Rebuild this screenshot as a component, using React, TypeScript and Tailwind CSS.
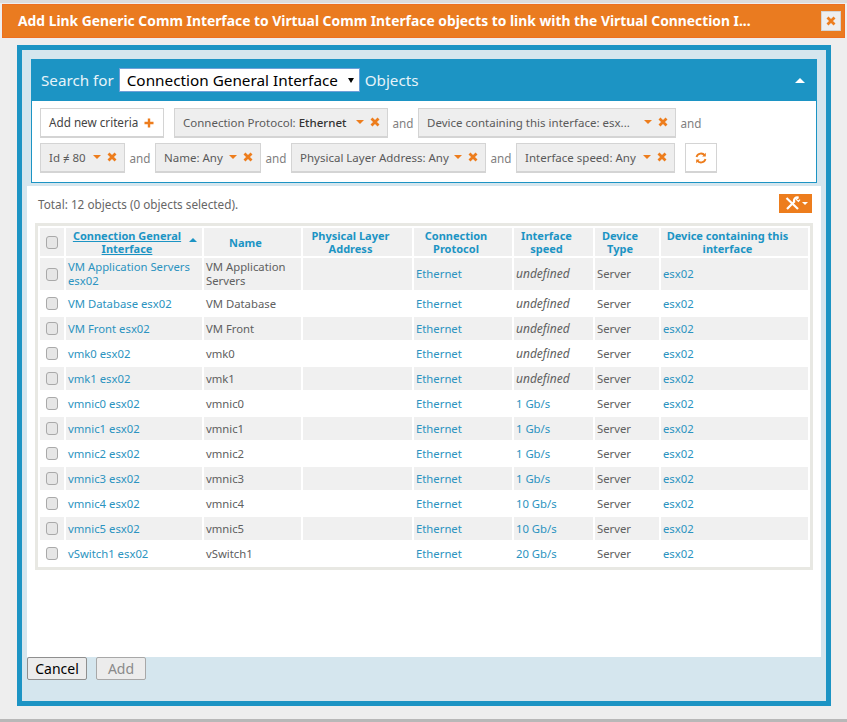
import React from 'react';

const font = "font-['Noto_Sans','Open_Sans',sans-serif]";

interface IRow {
  label: string;
  name: string;
  speed: string;
}

const rows: IRow[] = [
  { label: 'VM Application Servers esx02', name: 'VM Application Servers', speed: 'undefined' },
  { label: 'VM Database esx02', name: 'VM Database', speed: 'undefined' },
  { label: 'VM Front esx02', name: 'VM Front', speed: 'undefined' },
  { label: 'vmk0 esx02', name: 'vmk0', speed: 'undefined' },
  { label: 'vmk1 esx02', name: 'vmk1', speed: 'undefined' },
  { label: 'vmnic0 esx02', name: 'vmnic0', speed: '1 Gb/s' },
  { label: 'vmnic1 esx02', name: 'vmnic1', speed: '1 Gb/s' },
  { label: 'vmnic2 esx02', name: 'vmnic2', speed: '1 Gb/s' },
  { label: 'vmnic3 esx02', name: 'vmnic3', speed: '1 Gb/s' },
  { label: 'vmnic4 esx02', name: 'vmnic4', speed: '10 Gb/s' },
  { label: 'vmnic5 esx02', name: 'vmnic5', speed: '10 Gb/s' },
  { label: 'vSwitch1 esx02', name: 'vSwitch1', speed: '20 Gb/s' },
];

function XIcon({ size = 10 }: { size?: number }) {
  return (
    <svg width={size} height={size} viewBox="0 0 10 10" className="shrink-0">
      <path d="M1.5 1.5 L8.5 8.5 M8.5 1.5 L1.5 8.5" stroke="#ed7d1d" strokeWidth="2.8" />
    </svg>
  );
}

function Caret() {
  return <span className="shrink-0 w-0 h-0 border-x-[4px] border-x-transparent border-t-[4px] border-t-[#ed7d1d] -mt-[2px]" />;
}

function Chip({ children, width }: { children: React.ReactNode; width: string }) {
  return (
    <div className={`${width} h-[30px] shrink-0 flex items-center pl-[8px] bg-[#eeeeee] border border-[#d4d4d4] border-b-2 text-[11.5px] text-[#5a5a5a]`}>
      <span className="whitespace-nowrap flex-1 pt-[1px]">{children}</span>
      <Caret />
      <span className="ml-[6px] mr-[7px] -mt-[2px]"><XIcon /></span>
    </div>
  );
}

function And({ width = 'w-[30px]' }: { width?: string }) {
  return <span className={`${width} text-center shrink-0 pt-[1px] text-[11.7px] text-[#808080]`}>and</span>;
}

function Checkbox() {
  return <span className="block mx-auto w-[12px] h-[13px] rounded-[3px] border border-[#a9a9a9] bg-[#e6e6e6]" />;
}

function Th({ children, width, pad = 'pl-[1px] pr-[15px]' }: { children: React.ReactNode; width: string; pad?: string }) {
  return (
    <th className={`${width} ${pad} bg-[#f0f0f0] text-[#1c94c4] text-[11px] leading-[13px] font-bold text-center`}>
      {children}
    </th>
  );
}

function ResultRow({ row, index }: { row: IRow; index: number }) {
  const cellBg = index % 2 === 0 ? 'bg-[#f0f0f0]' : 'bg-white';
  const height = index === 0 ? 'h-[32px]' : 'h-[23px]';
  const cell = `${cellBg} ${height} px-[2px] text-[11.3px] leading-[14px]`;

  return (
    <tr>
      <td className={cell}><Checkbox /></td>
      <td className={`${cell} text-[#2b93c0]`}>{row.label}</td>
      <td className={`${cell} text-[#606060]`}>{row.name}</td>
      <td className={cell} />
      <td className={`${cell} text-[#2b93c0]`}>Ethernet</td>
      {row.speed === 'undefined'
        ? <td className={`${cell} text-[#606060]`}><span className="italic text-[12px]">undefined</span></td>
        : <td className={`${cell} text-[#2b93c0]`}>{row.speed}</td>}
      <td className={`${cell} text-[#606060]`}>Server</td>
      <td className={`${cell} text-[#2b93c0]`}>esx02</td>
    </tr>
  );
}

function SearchPanel() {
  return (
    <div className="mx-[9px] mt-[9px]">
      <div className="h-[42px] bg-[#1c94c4] flex items-center pl-[10px] pr-[12px] text-[15.2px] text-[#e6f3f9]">
        <span>Search for</span>
        <div className="ml-[5px] w-[241px] h-[24px] bg-white border border-[#6f9fd8] flex items-center pl-[7px] text-[15.3px] text-black whitespace-nowrap">
          <span className="flex-1">Connection General Interface</span>
          <span className="mr-[5px] w-0 h-0 border-x-[3.5px] border-x-transparent border-t-[5px] border-t-black" />
        </div>
        <span className="ml-[5px] flex-1">Objects</span>
        <span className="w-0 h-0 border-x-[5px] border-x-transparent border-b-[5px] border-b-white" />
      </div>
      <div className="h-[82px] bg-white border border-t-0 border-[#1c94c4] pl-[8px] pt-[7px] flex flex-col gap-[5px]">
        <div className="flex items-center">
          <div className="w-[124px] h-[30px] flex items-center pl-[8px] border border-[#d4d4d4] border-b-2 text-[11.7px] text-[#444]">
            <span className="pt-[1px]">Add new criteria</span>
            <svg width="10" height="10" viewBox="0 0 10 10" className="ml-[6px]">
              <path d="M5 0.5 V9.5 M0.5 5 H9.5" stroke="#ed7d1d" strokeWidth="2.4" />
            </svg>
          </div>
          <div className="w-[10px]" />
          <Chip width="w-[214px]">Connection Protocol: <span className="text-[#333] font-medium">Ethernet</span></Chip>
          <And />
          <Chip width="w-[258px]">Device containing this interface: esx...</Chip>
          <And />
        </div>
        <div className="flex items-center">
          <Chip width="w-[85px]">Id ≠ 80</Chip>
          <And />
          <Chip width="w-[106px]">Name: Any</Chip>
          <And />
          <Chip width="w-[195px]">Physical Layer Address: Any</Chip>
          <And />
          <Chip width="w-[159px]">Interface speed: Any</Chip>
          <div className="ml-[10px] w-[32px] h-[30px] flex items-center justify-center border border-[#d4d4d4] border-b-2">
            <svg width="12" height="12" viewBox="0 0 12 12" fill="none" stroke="#ed7d1d" strokeWidth="1.8">
              <path d="M1.5 5 A4.6 4.6 0 0 1 9.8 3.6" />
              <path d="M10.5 7 A4.6 4.6 0 0 1 2.2 8.4" />
              <path d="M10.8 0.8 V4.4 H7.2 Z M1.2 11.2 V7.6 H4.8 Z" fill="#ed7d1d" stroke="none" />
            </svg>
          </div>
        </div>
      </div>
    </div>
  );
}

function ResultsTable() {
  return (
    <div className="ml-[8px] w-[778px] border-[3px] border-[#e8e8e3] bg-white">
      <table className="table-fixed border-separate border-spacing-[2px] w-[772px]">
        <thead>
          <tr className="h-[28px]">
            <Th width="w-[24px]" pad="px-0"><Checkbox /></Th>
            <Th width="w-[136px]">
              <span className="relative block">
                <span className="underline">Connection General<br />Interface</span>
                <span className="absolute -right-[10px] top-[9px] w-0 h-0 border-x-[4px] border-x-transparent border-b-[4px] border-b-[#1c94c4]" />
              </span>
            </Th>
            <Th width="w-[97px]">Name</Th>
            <Th width="w-[109px]">Physical Layer Address</Th>
            <Th width="w-[98px]">Connection Protocol</Th>
            <Th width="w-[79px]">Interface speed</Th>
            <Th width="w-[64px]">Device Type</Th>
            <Th width="w-[147px]">Device containing this interface</Th>
          </tr>
        </thead>
        <tbody>
          {rows.map((row, i) => <ResultRow key={row.label} row={row} index={i} />)}
        </tbody>
      </table>
    </div>
  );
}

export default function App() {
  return (
    <div className={`w-[847px] h-[722px] overflow-hidden bg-[#eeeeee] flex flex-col ${font}`}>
      <div className="h-[3px] bg-[#dcdcdc]" />
      <div className="mt-[1px] mx-[2px] h-[34px] bg-[#ea7b20] border border-[#ee6f20] flex items-center pl-[15px] pr-[1px]">
        <h1 className="flex-1 text-[13.85px] font-bold text-white whitespace-nowrap">
          Add Link Generic Comm Interface to Virtual Comm Interface objects to link with the Virtual Connection I...
        </h1>
      </div>
      <div className="relative">
        <button className="absolute right-[6px] -top-[27px] w-[20px] h-[20px] flex items-center justify-center bg-[#eeeeee] border border-[#d4d4d4]">
          <XIcon />
        </button>
      </div>

      <div className="ml-[17px] mt-[7px] w-[814px] h-[661px] border-[5px] border-[#1c94c4] bg-[#d5e6ee] flex flex-col">
        <SearchPanel />
        <div className="ml-[5px] mt-[3px] w-[794px] h-[471px] bg-white shrink-0">
          <div className="h-[37px] flex items-start justify-between pl-[11px] pr-[9px]">
            <span className="mt-[7px] text-[11.75px] text-[#666] leading-[22px]">Total: 12 objects (0 objects selected).</span>
            <div className="mt-[8px] w-[33px] h-[19px] bg-[#ed7d1d] flex items-center justify-center gap-[1px]">
              <svg width="17" height="15" viewBox="0 0 17 15" fill="none" stroke="white" strokeWidth="2.2">
                <path d="M2.5 2 L14 13" />
                <path d="M14.5 1.5 A3.4 3.4 0 0 0 10.2 5.8 L3 13" />
                <path d="M14.5 1.5 L12.4 3.6 L14.4 5.4 L16 3.6" strokeWidth="1.2" />
              </svg>
              <span className="w-0 h-0 border-x-[3px] border-x-transparent border-t-[3px] border-t-white" />
            </div>
          </div>
          <ResultsTable />
        </div>
        <div className="ml-[5px] flex gap-[9px] items-start">
          <button className="w-[60px] h-[23px] bg-[#ececec] border border-[#8f8f8f] rounded-[2px] text-[14px] text-black">Cancel</button>
          <button className="w-[50px] h-[23px] bg-[#ececec] border border-[#a8a8a8] rounded-[2px] text-[14px] text-[#8a8a8a]">Add</button>
        </div>
      </div>
      <div className="mt-auto h-[3px] bg-[#b8b8b8]" />
    </div>
  );
}
